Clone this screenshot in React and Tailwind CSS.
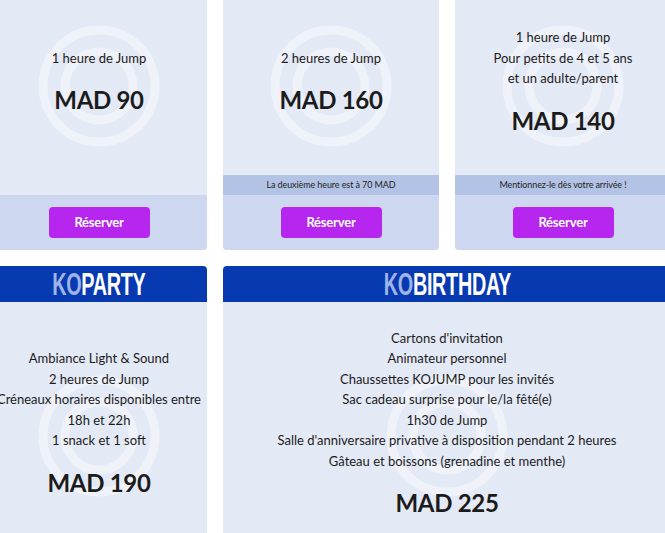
import React from 'react';

const offers = [
  { lines: ['1 heure de Jump'], price: 'MAD 90' },
  { lines: ['2 heures de Jump'], price: 'MAD 160', note: 'La deuxième heure est à 70 MAD' },
  {
    lines: ['1 heure de Jump', 'Pour petits de 4 et 5 ans', 'et un adulte/parent'],
    price: 'MAD 140',
    note: 'Mentionnez-le dès votre arrivée !',
  },
];

function Rings({ className }) {
  return (
    <svg className={className} width="124" height="124" viewBox="0 0 124 124" fill="none">
      <circle cx="62" cy="62" r="56" stroke="white" strokeOpacity="0.4" strokeWidth="9" />
      <circle cx="62" cy="62" r="34" stroke="white" strokeOpacity="0.4" strokeWidth="9" />
    </svg>
  );
}

function Content({ lines, price }) {
  return (
    <div className="relative z-10 flex flex-col items-center text-center text-[#1b1b1b]">
      {lines.map((l, i) => (
        <p key={i} className="text-[13px] leading-[20.5px] whitespace-nowrap">{l}</p>
      ))}
      <p className="mt-[17px] text-[24px] leading-[30px] font-bold tracking-[-0.3px]">{price}</p>
    </div>
  );
}

function OfferCard({ lines, price, note }) {
  return (
    <div className="flex flex-col rounded-b-[4px] overflow-hidden bg-[#e4e9f6]">
      <div className="relative h-[175px] flex items-center justify-center pb-[12px]">
        <Rings className="absolute left-1/2 top-[24px] -translate-x-1/2" />
        <Content lines={lines} price={price} />
      </div>
      <div className={note ? 'h-[20px] bg-[#b3c3e6] flex items-center justify-center' : 'h-[20px]'}>
        {note && <span className="text-[9px] tracking-[-0.1px] text-[#222]">{note}</span>}
      </div>
      <div className="h-[55px] bg-[#cdd7ef] flex items-center justify-center">
        <button className="w-[101px] h-[31px] rounded-[4px] bg-[#b626ee] text-white text-[13px] font-bold tracking-[-0.2px]">
          Réserver
        </button>
      </div>
    </div>
  );
}

function PackCard({ title, lines, price, wide }) {
  return (
    <div className={wide ? 'col-span-2 flex flex-col' : 'flex flex-col'}>
      <div className="h-[36px] rounded-t-[4px] bg-[#0739b0] flex items-center justify-center overflow-hidden">
        <span
          className="scale-x-[0.64] text-[31px] leading-none font-bold tracking-[-0.5px]"
          style={{ fontFamily: '"Liberation Sans Narrow", "Liberation Sans", sans-serif' }}
        >
          <span className="text-[#9fb4e6]">KO</span>
          <span className="text-white">{title}</span>
        </span>
      </div>
      <div className="relative h-[242px] bg-[#e4e9f6] flex items-center justify-center">
        <Rings className="absolute left-1/2 top-[72px] -translate-x-1/2" />
        <Content lines={lines} price={price} />
      </div>
    </div>
  );
}

export default function App() {
  return (
    <div className="w-[665px] h-[533px] overflow-hidden bg-white" style={{ fontFamily: 'Lato, "Open Sans", sans-serif' }}>
      <div className="ml-[-9px] grid grid-cols-[216px_216px_216px] gap-x-[16px] gap-y-[16px]">
        {offers.map((o, i) => (
          <OfferCard key={i} {...o} />
        ))}
        <PackCard
          title="PARTY"
          lines={['Ambiance Light & Sound', '2 heures de Jump', 'Créneaux horaires disponibles entre', '18h et 22h', '1 snack et 1 soft']}
          price="MAD 190"
        />
        <PackCard
          title="BIRTHDAY"
          wide
          lines={[
            "Cartons d'invitation",
            'Animateur personnel',
            'Chaussettes KOJUMP pour les invités',
            'Sac cadeau surprise pour le/la fêté(e)',
            '1h30 de Jump',
            "Salle d'anniversaire privative à disposition pendant 2 heures",
            'Gâteau et boissons (grenadine et menthe)',
          ]}
          price="MAD 225"
        />
      </div>
    </div>
  );
}
